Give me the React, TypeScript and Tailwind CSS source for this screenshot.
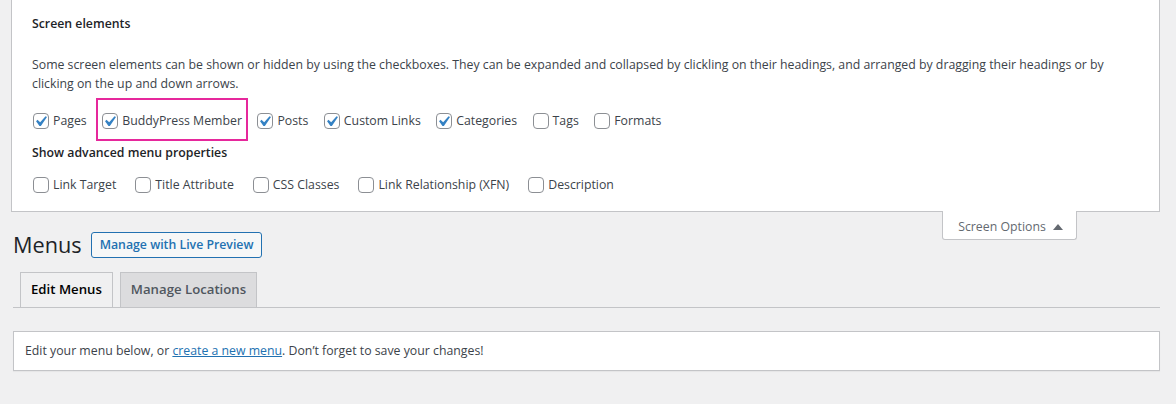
import React from 'react';

interface CheckItemProps {
  label: string;
  checked?: boolean;
  highlight?: boolean;
}

const CheckBox: React.FC<{ checked?: boolean }> = ({ checked }) => (
  <span className="relative inline-block h-4 w-4 flex-shrink-0 rounded-[4px] border border-[#8c8f94] bg-white">
    {checked && (
      <svg viewBox="0 0 20 20" className="absolute left-[-4px] top-[-3px] h-[21px] w-[21px]">
        <path d="M14.83 4.89l1.34.94-5.81 8.38H9.02L5.78 9.67l1.34-1.25 2.57 2.4z" fill="#3582c4" />
      </svg>
    )}
  </span>
);

const CheckItem: React.FC<CheckItemProps> = ({ label, checked, highlight }) => (
  <label className="relative flex items-center gap-[4px] whitespace-nowrap">
    <CheckBox checked={checked} />
    <span>{label}</span>
    {highlight && (
      <span className="pointer-events-none absolute -bottom-[11px] -left-[6px] -right-[6px] -top-[13px] border-[2.5px] border-[#e6289c]" />
    )}
  </label>
);

const elements = [
  { label: 'Pages', checked: true },
  { label: 'BuddyPress Member', checked: true, highlight: true },
  { label: 'Posts', checked: true },
  { label: 'Custom Links', checked: true },
  { label: 'Categories', checked: true },
  { label: 'Tags' },
  { label: 'Formats' },
];

const advanced = ['Link Target', 'Title Attribute', 'CSS Classes', 'Link Relationship (XFN)', 'Description'];

export default function App() {
  return (
    <div className="min-h-screen bg-[#f0f0f1] font-['Open_Sans',sans-serif] text-[12.3px] leading-[19.5px] text-[#3c434a]">
      {/* screen options panel */}
      <div className="ml-[11px] w-[1149px] border-x border-b border-[#c3c4c7] bg-white pl-[21px] pr-[10px] pt-[14px] pb-[16px]">
        <h5 className="-ml-px font-semibold text-[#1d2327]">Screen elements</h5>
        <p className="-ml-px mt-[21px] leading-[19px]">
          Some screen elements can be shown or hidden by using the checkboxes. They can be expanded and collapsed by clickling on their headings, and arranged by dragging their headings or by
          <br />
          clicking on the up and down arrows.
        </p>
        <div className="mt-[18px] flex h-5 items-center gap-[15.5px]">
          {elements.map((e) => (
            <CheckItem key={e.label} label={e.label} checked={e.checked} highlight={e.highlight} />
          ))}
        </div>
        <h5 className="-ml-px mt-[12px] font-semibold text-[#1d2327]">Show advanced menu properties</h5>
        <div className="mt-[13px] flex h-5 items-center gap-[19px]">
          {advanced.map((a) => (
            <CheckItem key={a} label={a} />
          ))}
        </div>
      </div>

      {/* screen options tab */}
      <div className="flex h-[20px] w-[1160px] justify-end pr-[83px]">
        <button className="-mt-px flex h-[29px] w-[135px] items-center justify-center gap-[7px] rounded-b-[3px] border-x border-b border-[#c3c4c7] bg-white pt-[3px] pl-[2px] text-[12.3px] text-[#646970]">
          <span>Screen Options</span>
          <svg viewBox="0 0 10 6" className="h-[6px] w-[10px]">
            <path d="M0 6 L5 0 L10 6 Z" fill="#646970" />
          </svg>
        </button>
      </div>

      {/* heading */}
      <div className="flex h-[26px] items-center pl-[13px]">
        <h1 className="mr-[9px] text-[21.7px] font-normal leading-[26px] text-[#1d2327]">Menus</h1>
        <a className="flex h-[26px] items-center rounded-[3px] border border-[#2271b1] bg-[#f6f7f7] px-[8px] font-semibold text-[#2271b1]">
          Manage with Live Preview
        </a>
      </div>

      {/* tabs */}
      <div className="ml-[13px] mt-[14px] flex w-[1147px] border-b border-[#c3c4c7] pl-[7px]">
        <span className="-mb-px flex h-[36px] items-center border border-[#c3c4c7] bg-[#f0f0f1] px-[10px] text-[13.2px] font-semibold text-[#000]">
          Edit Menus
        </span>
        <span className="-mb-px ml-[7px] flex h-[36px] items-center border border-[#c3c4c7] bg-[#dcdcde] px-[10px] text-[13.2px] font-semibold text-[#50575e]">
          Manage Locations
        </span>
      </div>

      {/* notice */}
      <div className="ml-[13px] mt-[23px] w-[1147px] border border-[#c3c4c7] bg-white px-[11px] py-[9px] shadow-[0_1px_1px_rgba(0,0,0,0.04)]">
        Edit your menu below, or{' '}
        <a className="text-[#2271b1] underline">create a new menu</a>. Don&#8217;t forget to save your changes!
      </div>
    </div>
  );
}
